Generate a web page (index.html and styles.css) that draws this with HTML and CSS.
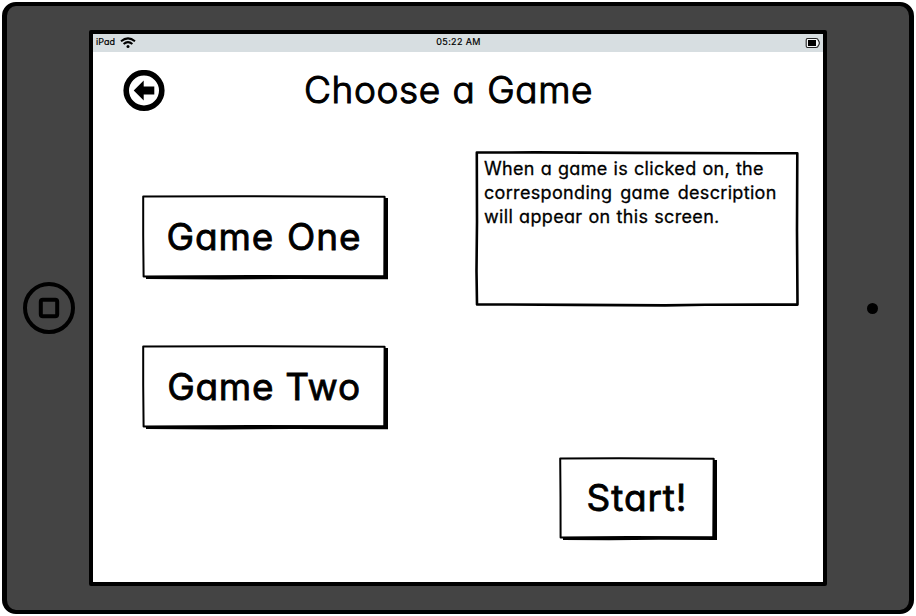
FILE: index.html
```html
<!DOCTYPE html>
<html lang="en">
<head>
<meta charset="utf-8">
<title>Choose a Game</title>
<link rel="stylesheet" href="styles.css">
</head>
<body>
<div class="tablet">
  <aside class="bezel">
    <svg class="home" viewBox="0 0 52 52"><circle cx="26" cy="26" r="24"/><rect x="17.8" y="17.8" width="16.4" height="16.4" rx="2"/></svg>
  </aside>
  <div class="screen">
    <div class="status">
      <div class="carrier"><span class="ipad">iPad</span>
        <svg class="wifi" viewBox="0 0 16 12"><path d="M1 4.3Q8-1.5 15 4.3M3.6 7Q8 3.3 12.4 7"/><circle cx="8" cy="9.6" r="1.5"/></svg>
      </div>
      <span class="time">05:22 AM</span>
      <svg class="battery" viewBox="0 0 16 12"><path d="M2.5 1.5H11Q13 1.5 13.3 3.3Q15.4 6 13.3 8.7Q13 10.5 11 10.5H2.5Q1.2 10.5 1.2 9V3Q1.2 1.5 2.5 1.5Z"/><rect x="3" y="3" width="8" height="6"/></svg>
    </div>
    <header class="header">
      <svg class="back" viewBox="0 0 42 42"><circle cx="21" cy="20.5" r="17.8"/><path d="M10.7 20.5 20.7 10.6V16.6H31.3V24.4H20.7V30.4Z"/></svg>
      <h1 class="title">Choose a Game</h1>
    </header>
    <main class="content">
      <div class="games">
        <button class="btn">
          <svg class="sketch" viewBox="0 0 246 85"><path class="shade" d="M242 3H246V84.3L150 84L80 84.5L4 84V81H242Z"/><path class="box" d="M1.2 1.4L100 1.2L242.6 1.8L242.3 81.2L110 81.1L1.6 81.6L1.2 40Z"/></svg>
          <span class="label">Game One</span>
        </button>
        <button class="btn">
          <svg class="sketch" viewBox="0 0 246 85"><path class="shade" d="M242 3H246V84.3L150 84L80 84.5L4 84V81H242Z"/><path class="box" d="M1.2 1.4L100 1.2L242.6 1.8L242.3 81.2L110 81.1L1.6 81.6L1.2 40Z"/></svg>
          <span class="label two">Game Two</span>
        </button>
      </div>
      <div class="details">
        <div class="description">
          <svg class="sketch" viewBox="0 0 324 156"><path class="panel" d="M1.8 1.5L60 1.4L160 1.9L322.3 2.3L322 80L322.5 153.6L230 153.7L190 154.4L100 153.9L2 153.4L1.5 120L2 70Z"/></svg>
          <p class="text"><span class="l1">When a game is clicked on, the</span><br><span class="l2">corresponding game description</span><br><span class="l3">will appear on this screen.</span></p>
        </div>
        <button class="btn start">
          <svg class="sketch" viewBox="0 0 158 84"><path class="shade" d="M154 3H158V83L100 82.8L50 83.2L4 83V80H154Z"/><path class="box" d="M1.2 1.4L60 1.2L154.7 1.8L154.3 80.2L70 80.1L1.6 80.6L1.5 40Z"/></svg>
          <span class="label">Start!</span>
        </button>
      </div>
    </main>
  </div>
  <aside class="bezel"><span class="camera"></span></aside>
</div>
</body>
</html>
```
FILE: styles.css
```css
* { box-sizing: border-box; }
body { margin: 0; padding: 2px; background: #fff; color: #000; font-family: Inter, "Liberation Sans", sans-serif; font-feature-settings: "cv11" 1; stroke-linejoin: round; }
.tablet { width: 912px; height: 612px; display: grid; grid-template-columns: 82px 738px 82px; background: #444; border: 4px solid #000; border-left-width: 5px; border-right-width: 5px; border-radius: 14px; }
.bezel { display: flex; align-items: center; justify-content: center; }
.home { width: 52px; height: 52px; margin-left: 2px; fill: none; stroke: #000; stroke-width: 4; }
.camera { width: 11px; height: 11px; border-radius: 50%; background: #000; margin-left: 8px; }
.screen { height: 556px; margin-top: 24px; border: 4px solid #000; border-radius: 2px; background: #fff; }
.status { height: 18px; background: #d7dee1; display: grid; grid-template-columns: 1fr auto 1fr; align-items: center; font-size: 9px; line-height: 16px; padding: 0 2px 0 3px; }
.ipad, .time { position: relative; top: -1px; -webkit-text-stroke: 0.2px #000; }
.time { letter-spacing: 0.35px; }
.carrier { display: flex; align-items: center; gap: 5px; }
.wifi { width: 16px; height: 12px; margin-top: -1px; fill: none; stroke: #000; stroke-width: 2; }
.wifi circle { fill: #000; stroke: none; }
.battery { width: 16px; height: 12px; justify-self: end; margin-top: -1px; }
.battery path { fill: #f4f6f7; stroke: #222; stroke-width: 1.1; }
.header { display: flex; height: 76px; align-items: center; padding-left: 30px; }
.back { width: 42px; height: 42px; margin-top: 2px; }
.back circle { fill: none; stroke: #000; stroke-width: 5.6; }
.title { margin: 0 0 0 139px; font-size: 37px; font-weight: 300; line-height: 44px; letter-spacing: 0.6px; word-spacing: 0.8px; -webkit-text-stroke: 1.1px #000; white-space: nowrap; }
.content { display: flex; padding-left: 49px; }
.games { width: 246px; margin-top: 67px; display: flex; flex-direction: column; gap: 65px; }
.btn { position: relative; display: flex; width: 246px; height: 85px; padding: 0 2px 2px 0; align-items: center; justify-content: center; border: 0; background: none; color: inherit; font: inherit; font-feature-settings: inherit; }
.sketch { position: absolute; inset: 0; width: 100%; height: 100%; }
.box { fill: #fff; stroke: #000; stroke-width: 2; stroke-linejoin: round; }
.panel { fill: #fff; stroke: #000; stroke-width: 2.6; stroke-linejoin: round; }
.label { position: relative; font-size: 37px; font-weight: 400; line-height: 44px; letter-spacing: 0.9px; word-spacing: 1.5px; -webkit-text-stroke: 0.8px #000; white-space: nowrap; }
.two { letter-spacing: 0.7px; word-spacing: 0; }
.details { width: 324px; margin: 23px 0 0 87px; }
.description { position: relative; height: 156px; padding: 6px 9px; }
.text { position: relative; margin: 0; font-size: 18px; line-height: 24px; letter-spacing: 0.33px; -webkit-text-stroke: 0.3px #000; white-space: nowrap; }
.l1 { word-spacing: 0.5px; }
.l2 { word-spacing: 2.4px; }
.l3 { word-spacing: 0.6px; }
.start { width: 158px; height: 84px; margin: 150px 0 0 84px; }
```
